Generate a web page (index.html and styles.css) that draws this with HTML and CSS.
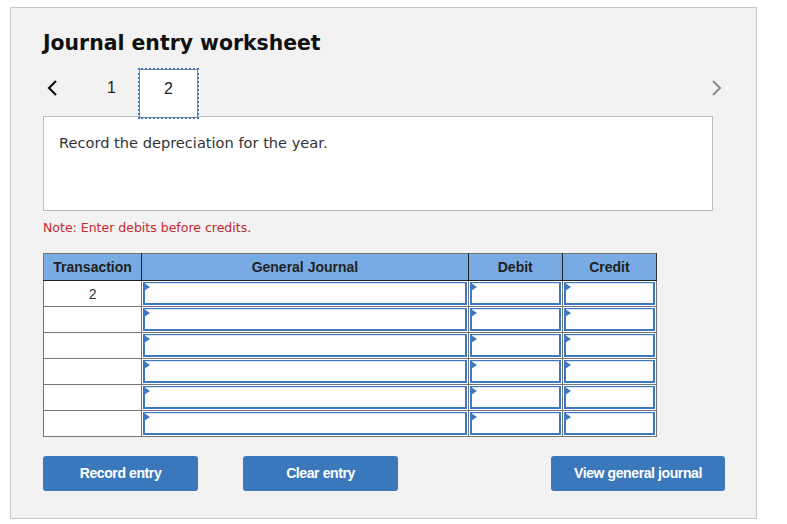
FILE: index.html
```html
<!DOCTYPE html>
<html lang="en">
<head>
    <meta charset="UTF-8">
    <title>Journal entry worksheet</title>
    <link rel="stylesheet" href="styles.css">
</head>
<body>

<div class="panel">
    <h1>Journal entry worksheet</h1>

    <div class="tabs">
        <span class="arrow prev">
            <svg width="12" height="18" viewBox="0 0 12 18"><path d="M10 2 L3 9 L10 16" fill="none" stroke="#111" stroke-width="2.2"/></svg>
        </span>
        <span class="tab first">1</span>
        <span class="tab active">2</span>
        <span class="arrow next">
            <svg width="12" height="18" viewBox="0 0 12 18"><path d="M2 2 L9 9 L2 16" fill="none" stroke="#8a8a8a" stroke-width="2"/></svg>
        </span>
    </div>

    <div class="question">Record the depreciation for the year.</div>

    <p class="note">Note: Enter debits before credits.</p>

    <table class="journal">
        <thead>
            <tr>
                <th class="col-trans">Transaction</th>
                <th class="col-gj">General Journal</th>
                <th class="col-amt">Debit</th>
                <th class="col-amt">Credit</th>
            </tr>
        </thead>
        <tbody>
            <tr>
                <td class="trans">2</td>
                <td><div class="entry"></div></td>
                <td><div class="entry"></div></td>
                <td><div class="entry"></div></td>
            </tr>
            <tr>
                <td class="trans"></td>
                <td><div class="entry"></div></td>
                <td><div class="entry"></div></td>
                <td><div class="entry"></div></td>
            </tr>
            <tr>
                <td class="trans"></td>
                <td><div class="entry"></div></td>
                <td><div class="entry"></div></td>
                <td><div class="entry"></div></td>
            </tr>
            <tr>
                <td class="trans"></td>
                <td><div class="entry"></div></td>
                <td><div class="entry"></div></td>
                <td><div class="entry"></div></td>
            </tr>
            <tr>
                <td class="trans"></td>
                <td><div class="entry"></div></td>
                <td><div class="entry"></div></td>
                <td><div class="entry"></div></td>
            </tr>
            <tr>
                <td class="trans"></td>
                <td><div class="entry"></div></td>
                <td><div class="entry"></div></td>
                <td><div class="entry"></div></td>
            </tr>
        </tbody>
    </table>

    <div class="actions">
        <a href="#" class="button">Record entry</a>
        <a href="#" class="button">Clear entry</a>
        <a href="#" class="button wide">View general journal</a>
    </div>
</div>

</body>
</html>
```

FILE: styles.css
```css
body {
    margin: 0;
    background-color: #fff;
    font-family: "DejaVu Sans", Verdana, sans-serif;
}

.panel {
    margin: 7px 0 0 10px;
    width: 713px;
    height: 488px;
    padding: 22px 0 0 32px;
    background-color: #f2f2f2;
    border: 1px solid #c8c8c8;
}

h1 {
    margin: 0;
    font-size: 20.4px;
    line-height: 26px;
    font-weight: bold;
    color: #111;
}

.tabs {
    display: flex;
    align-items: flex-start;
    width: 680px;
    height: 49px;
    margin-top: 13px;
    margin-bottom: -2px;
    position: relative;
    z-index: 1;
}

.arrow {
    display: flex;
    align-items: center;
    height: 37px;
}

.prev {
    margin-left: 3px;
}

.next {
    margin-left: auto;
}

.tab {
    font-family: "Liberation Sans", Arial, sans-serif;
    font-size: 16px;
    color: #222;
    width: 59px;
    height: 49px;
    line-height: 37px;
    text-align: center;
    box-sizing: border-box;
}

.tab.first {
    margin-left: 49px;
    width: 32px;
    text-align: left;
}

.tab.active {
    background-color: #fff;
    border: 1px solid #8a8a8a;
    outline: 2px dotted #3b78c2;
    outline-offset: -1px;
}

.question {
    width: 653px;
    height: 64px;
    padding: 17px 0 12px 15px;
    background-color: #fff;
    border: 1px solid #bdbdbd;
    font-size: 14.6px;
    color: #333;
}

.note {
    margin: 9px 0 17px;
    font-size: 12.5px;
    line-height: 16px;
    color: #c5282d;
}

.journal {
    border-collapse: collapse;
    width: 614px;
    font-family: "Liberation Sans", Arial, sans-serif;
    border: 1px solid #777;
}

.journal th {
    height: 26px;
    padding: 0;
    background-color: #78abe3;
    border: 1px solid #222;
    border-top-color: #777;
    font-size: 14px;
    font-weight: bold;
    color: #222;
}

.journal th:first-child {
    border-left-color: #777;
}

.journal th:last-child {
    border-right-color: #333;
}

.col-trans { width: 97px; }
.col-gj { width: 325px; }
.col-amt { width: 93px; }

.journal td {
    padding: 1px;
    background-color: #fff;
    border: 1px solid #777;
}

.journal td.trans {
    text-align: center;
    font-size: 14px;
    color: #333;
}

.entry {
    position: relative;
    box-sizing: border-box;
    height: 23px;
    border: 2px solid #3d78c0;
    border-top-width: 1px;
    box-shadow: inset 0 1px 0 #d6e4f4;
    background-color: #fff;
}

.entry::before {
    content: "";
    position: absolute;
    left: -1px;
    top: 0;
    border-left: 6px solid #3d78c0;
    border-top: 4px solid transparent;
    border-bottom: 4px solid transparent;
}

.actions {
    display: flex;
    width: 682px;
    margin-top: 19px;
}

.button {
    display: block;
    width: 155px;
    height: 35px;
    line-height: 34px;
    margin-right: 45px;
    background-color: #3b77bb;
    border-radius: 3px;
    color: #fff;
    text-decoration: none;
    text-align: center;
    font-family: "Liberation Sans", Arial, sans-serif;
    font-size: 14px;
    font-weight: bold;
    letter-spacing: -0.4px;
}

.button.wide {
    width: 174px;
    margin-right: 0;
    margin-left: auto;
}
```
